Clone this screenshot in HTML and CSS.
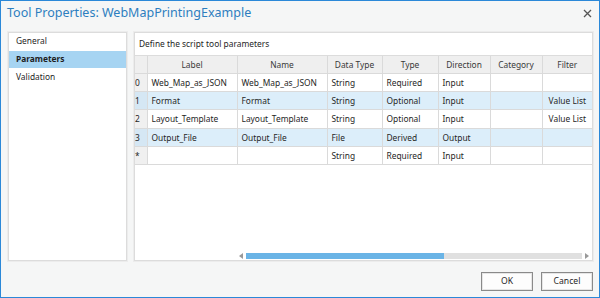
FILE: index.html
```html
<!DOCTYPE html>
<html lang="en">
<head>
    <meta charset="UTF-8">
    <title>Tool Properties</title>
    <link rel="stylesheet" href="styles.css">
</head>
<body>
    <div class="window">
        <div class="titlebar">
            <div class="title">Tool Properties: WebMapPrintingExample</div>
            <svg class="close" width="9" height="9" viewBox="0 0 9 9">
                <path d="M1 1 L8 8 M8 1 L1 8" stroke="#555" stroke-width="1.3" fill="none"/>
            </svg>
        </div>
        <div class="main">
            <div class="nav panel">
                <div class="nav-item">General</div>
                <div class="nav-item active">Parameters</div>
                <div class="nav-item">Validation</div>
            </div>
            <div class="content panel">
                <div class="caption">Define the script tool parameters</div>
                <table class="grid">
                    <colgroup>
                        <col class="c-num"><col class="c-label"><col class="c-name"><col class="c-dtype">
                        <col class="c-type"><col class="c-dir"><col class="c-cat"><col class="c-filter">
                    </colgroup>
                    <thead>
                        <tr>
                            <th></th><th>Label</th><th>Name</th><th>Data Type</th>
                            <th>Type</th><th>Direction</th><th>Category</th><th>Filter</th>
                        </tr>
                    </thead>
                    <tbody>
                        <tr>
                            <td class="num">0</td><td>Web_Map_as_JSON</td><td>Web_Map_as_JSON</td><td>String</td>
                            <td>Required</td><td>Input</td><td></td><td></td>
                        </tr>
                        <tr class="alt">
                            <td class="num">1</td><td>Format</td><td>Format</td><td>String</td>
                            <td>Optional</td><td>Input</td><td></td><td class="right">Value List</td>
                        </tr>
                        <tr>
                            <td class="num">2</td><td>Layout_Template</td><td>Layout_Template</td><td>String</td>
                            <td>Optional</td><td>Input</td><td></td><td class="right">Value List</td>
                        </tr>
                        <tr class="alt">
                            <td class="num">3</td><td>Output_File</td><td>Output_File</td><td>File</td>
                            <td>Derived</td><td>Output</td><td></td><td></td>
                        </tr>
                        <tr>
                            <td class="num">*</td><td></td><td></td><td>String</td>
                            <td>Required</td><td>Input</td><td></td><td></td>
                        </tr>
                    </tbody>
                </table>
                <div class="spacer"></div>
                <div class="hscroll">
                    <span class="arrow left"></span>
                    <div class="track"><div class="thumb"></div></div>
                    <span class="arrow right"></span>
                </div>
            </div>
        </div>
        <div class="footer">
            <div class="btn">OK</div>
            <div class="btn">Cancel</div>
        </div>
    </div>
</body>
</html>
```
FILE: styles.css
```css
html, body{
    margin: 0;
    padding: 0;
    font-family: "Noto Sans", "Open Sans", sans-serif;
    color: #262626;
}
.window{
    width: 600px;
    height: 298px;
    box-sizing: border-box;
    border: 1px solid #2b88d8;
    background: #f5f6f6;
    display: flex;
    flex-direction: column;
}
.titlebar{
    height: 31px;
    display: flex;
    align-items: flex-start;
    justify-content: space-between;
    padding: 3px 7px 0 6px;
    box-sizing: border-box;
}
.title{
    font-size: 12.5px;
    line-height: 18px;
    color: #2d7ebf;
}
.close{
    margin-top: 5px;
}
.main{
    display: flex;
    gap: 7px;
    padding: 0 6px 0 7px;
    height: 229px;
}
.panel{
    background: #fff;
    border: 1px solid #dcdcdc;
    box-shadow: 0 0 0 1px #ececec;
    box-sizing: border-box;
}
.nav{
    width: 119px;
}
.nav-item{
    height: 17px;
    line-height: 16px;
    padding-left: 7px;
    font-size: 8.4px;
    margin-bottom: 1px;
}
.nav-item.active{
    background: #a6d4f2;
    font-weight: bold;
    color: #1e1e1e;
}
.content{
    flex: 1;
    display: flex;
    flex-direction: column;
}
.caption{
    height: 23px;
    line-height: 22px;
    font-size: 8.4px;
    padding-left: 4px;
    border-bottom: 1px solid #dcdcdc;
    box-sizing: border-box;
}
.grid{
    border-collapse: collapse;
    table-layout: fixed;
    width: 457px;
    font-size: 8.4px;
}
.c-num{ width: 12px; }
.c-label{ width: 90px; }
.c-name{ width: 90px; }
.c-dtype{ width: 55px; }
.c-type{ width: 56px; }
.c-dir{ width: 52px; }
.c-cat{ width: 52px; }
.c-filter{ width: 50px; }
.grid th, .grid td{
    border: 1px solid #dadada;
    height: 17.4px;
    padding: 0 4px;
    white-space: nowrap;
    overflow: hidden;
    text-align: left;
    font-weight: normal;
}
.grid tr > :first-child{
    border-left: none;
}
.grid tr > :last-child{
    border-right: none;
}
.grid th{
    background: #efefef;
    color: #3a3a3a;
    text-align: center;
    height: 16.5px;
    border-top: none;
}
.grid td.num{
    background: #f0f0f0;
    padding: 0;
}
.grid tr.alt td{
    background: #dceefa;
}
.grid tr.alt td.num{
    background: #d5e7f4;
}
.grid td.right{
    text-align: right;
    padding-right: 6px;
}
.spacer{
    flex: 1;
}
.hscroll{
    height: 6px;
    display: flex;
    align-items: center;
    padding: 0 3px 0 104px;
    margin-bottom: 1px;
    gap: 3px;
}
.track{
    flex: 1;
    height: 6px;
    background: #e0e0e0;
}
.thumb{
    width: 198px;
    height: 6px;
    background: #6ab4e6;
}
.arrow{
    width: 0;
    height: 0;
    border-top: 3px solid transparent;
    border-bottom: 3px solid transparent;
}
.arrow.left{
    border-right: 4px solid #999;
}
.arrow.right{
    border-left: 4px solid #999;
}
.footer{
    display: flex;
    justify-content: flex-end;
    gap: 8px;
    padding: 11px 6px 0 0;
}
.btn{
    width: 52px;
    height: 19px;
    box-sizing: border-box;
    border: 1px solid #8a8a8a;
    box-shadow: inset 0 0 0 1px #e6e6e6;
    background: #fdfdfd;
    font-size: 8.6px;
    text-align: center;
    line-height: 17px;
}
```
